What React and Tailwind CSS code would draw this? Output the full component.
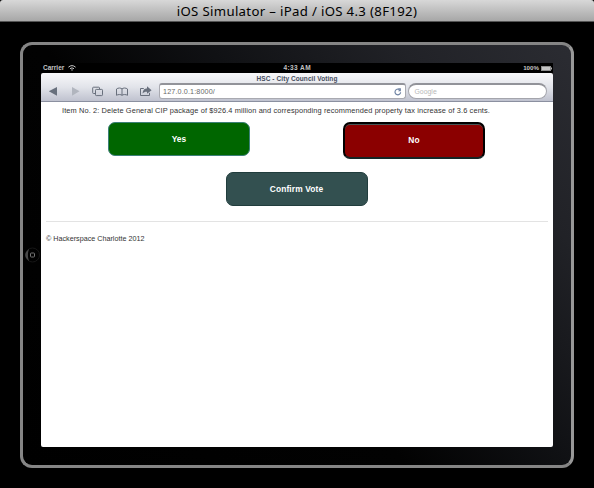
import React from "react";

function StatusBar() {
  return (
    <div className="relative flex h-[10px] items-center justify-between bg-black pl-[2px] pr-[1px] text-[6.5px] font-bold leading-[10px] text-[#c4c4c4]">
      <div className="flex items-center gap-[4px]">
        <span>Carrier</span>
        <svg width="8" height="6" viewBox="0 0 8 6" fill="none" stroke="#c4c4c4">
          <path d="M.4 2.2Q4-1 7.6 2.2M2 3.7Q4 2 6 3.7" />
          <path d="M3 4.6h2L4 5.9Z" fill="#c4c4c4" stroke="none" />
        </svg>
      </div>
      <span className="absolute left-[242.5px] top-0 tracking-[0.4px]">4:33 AM</span>
      <div className="flex items-center gap-[2px]">
        <span className="text-[6.2px]">100%</span>
        <svg width="11" height="5" viewBox="0 0 11 5">
          <rect x=".5" y=".5" width="9" height="4" fill="#c4c4c4" stroke="#8c8c8c" />
          <rect x="10" y="1.5" width="1" height="2" fill="#b4b4b4" />
        </svg>
      </div>
    </div>
  );
}

function Toolbar() {
  return (
    <div className="h-[29px] rounded-t-[2px] border-b border-[#8b90a0] bg-gradient-to-b from-[#f8f8fa] via-[#e2e4ea] to-[#bfc2cf]">
      <div className="h-[10px] text-center text-[6.5px] font-bold leading-[11px] tracking-[0.08px] text-[#464d5e]">
        HSC - City Council Voting
      </div>
      <div className="flex h-[16px] pl-[7px] pr-[5px]">
        <svg width="111" height="16" viewBox="0 0 111 16" fill="none" stroke="#686f7c" className="shrink-0">
          <path d="M.8 8.3 9 4v8.7Z" fill="#68707d" stroke="none" />
          <path d="M31.5 8.3 24 4v8.7Z" fill="#b1b5be" stroke="none" />
          <path d="M47 10.5h-1.5a.8.8 0 0 1-.8-.8v-4.7a.8.8 0 0 1 .8-.8h5.2a.8.8 0 0 1 .8.8v1" />
          <rect x="47.5" y="6.4" width="7" height="6.2" rx=".8" />
          <path d="M74 6v6.3M74 6C73 4.7 70 4.7 68.5 6v6.3C70 11.3 73 11.3 74 12.3 75 11.3 78 11.3 79.5 12.3V6C78 4.7 75 4.7 74 6" />
          <path d="M95.8 5.5h-3.3v7h9V9.8" />
          <path d="M94.6 10.6C94.9 6.8 96.8 5.5 99 5.5V3.3l4.6 3.9L99 10.8V8.7C97 8.6 95.8 9.1 94.6 10.6Z" fill="#686f7c" stroke="none" />
        </svg>
        <div className="flex h-[16px] w-[247px] shrink-0 items-center justify-between rounded-[3px] border border-t-2 border-[#a9aab1] border-t-[#929399] bg-white pl-[3px] pr-[2px] text-[7.2px] leading-[13px] tracking-[0.13px] text-[#686868]">
          <span>127.0.0.1:8000/</span>
          <svg width="10" height="10" viewBox="0 0 10 10" fill="none" stroke="#7185a5">
            <path d="M6.3 2.6A2.8 2.8 0 1 0 7.6 5.2" strokeWidth="1.2" />
            <path d="M4.9 1.2H7.9V4.2H4.9L6.4 2.7Z" fill="#7185a5" stroke="none" />
          </svg>
        </div>
        <div className="ml-[2px] h-[16px] w-[139px] shrink-0 rounded-full border border-t-2 border-[#a4a5ac] border-t-[#929399] bg-white pl-[5.5px] text-[6.9px] leading-[13px] text-[#b8b8b8]">
          Google
        </div>
      </div>
    </div>
  );
}

function VotingPage() {
  return (
    <div className="text-[#333]">
      <p className="ml-[21px] mt-[4px] h-[10px] whitespace-nowrap text-[7.4px] leading-[10px] tracking-[0.115px]">
        Item No. 2: Delete General CIP package of $926.4 million and corresponding recommended property tax increase of 3.6 cents.
      </p>
      <div className="ml-[67px] mt-[6px] flex h-[37px] items-start text-[8.4px] font-bold text-white">
        <button className="h-[34px] w-[142px] rounded-[7px] border border-[#3c8078] bg-[#006600] leading-[32px] tracking-[0.1px]">Yes</button>
        <button className="ml-[93px] h-[37px] w-[142px] rounded-[7px] border-2 border-black border-b-[#152525] bg-[#8b0000] leading-[33px] tracking-[0.1px] shadow-[inset_0_1px_0_#465454]">
          No
        </button>
      </div>
      <button className="ml-[185px] mt-[13px] block h-[34px] w-[142px] rounded-[7px] border border-[#213d3d] bg-[#335050] pr-[1px] text-[8.4px] font-bold leading-[32px] tracking-[0.12px] text-white">
        Confirm Vote
      </button>
      <div className="mx-[5px] mt-[15px] h-px bg-[#e3e3e3]" />
      <footer className="ml-[5px] mt-[12px] text-[7.2px] leading-[10px]">© Hackerspace Charlotte 2012</footer>
    </div>
  );
}

export default function App() {
  return (
    <div className="h-[488px] w-[594px] overflow-hidden bg-black font-['Liberation_Sans',Arial,sans-serif]">
      <header className="h-[22px] rounded-t-[3px] border-b border-[#555] bg-gradient-to-b from-[#d8d8d8] to-[#a7a7a7] text-center font-['Lucida_Grande','Noto_Sans',sans-serif] text-[13.2px] leading-[22px] tracking-[0.33px] text-black">
        iOS Simulator – iPad / iOS 4.3 (8F192)
      </header>
      <main className="ml-[20px] mt-[20px] flex h-[426px] w-[554px] rounded-[12px] border-[3px] border-[#858585] border-r-[#989898] bg-[linear-gradient(49deg,#000_0%,#020202_42%,#101114_60%,#212227_81%,#2b2c32_100%)]">
        <div className="flex w-[18px] items-center">
          <svg width="18" height="16" viewBox="0 0 18 16" fill="none">
            <circle cx="9.5" cy="8" r="7" stroke="#171717" />
            <path d="M6 2Q-1.5 8 6 14Q3.8 8 6 2Z" fill="#484848" />
            <rect x="7.5" y="6" width="4" height="4" rx=".8" stroke="#747474" />
          </svg>
        </div>
        <section className="mt-[18px] h-[384px] w-[512px] overflow-hidden rounded-b-[2px] bg-white">
          <div className="bg-black">
            <StatusBar />
            <Toolbar />
          </div>
          <VotingPage />
        </section>
      </main>
    </div>
  );
}
